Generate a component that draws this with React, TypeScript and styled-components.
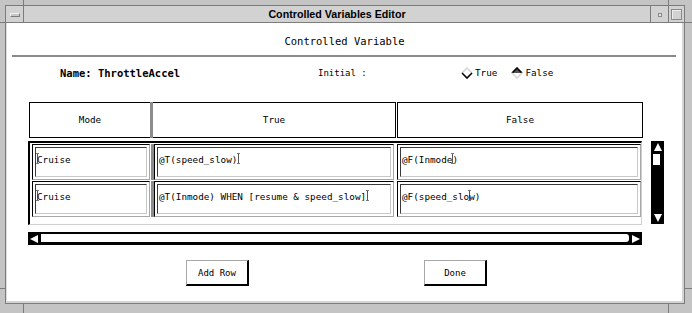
import styled, { createGlobalStyle } from 'styled-components';

const mono = `"DejaVu Sans Mono", "Liberation Mono", monospace`;
const line = '#7c7c7c';

const GlobalStyle = createGlobalStyle`
  html, body {
    margin: 0;
    padding: 0;
    background: #c4c4c4;
  }
`;

const Window = styled.div`
  position: relative;
  width: 692px;
  height: 313px;
  box-sizing: border-box;
  padding: 5px 7px 9px 5px;
  background: #c4c4c4;
  display: flex;
`;

const FrameTick = styled.div<{ $x: number; $y: number; $w: number; $h: number }>`
  position: absolute;
  left: ${p => p.$x}px;
  top: ${p => p.$y}px;
  width: ${p => p.$w}px;
  height: ${p => p.$h}px;
  background: ${line};
`;

const WindowBox = styled.div`
  flex: 1;
  display: flex;
  flex-direction: column;
  border: 1px solid ${line};
`;

const TitleBar = styled.div`
  height: 16px;
  display: flex;
  background: #d2d2d2;
  border-bottom: 1px solid ${line};
`;

const MenuButton = styled.div`
  width: 17px;
  border-right: 1px solid ${line};
  display: flex;
  align-items: center;
  justify-content: center;
`;

const MenuGlyph = styled.div`
  width: 8px;
  height: 2px;
  margin-top: 1px;
  border: 1px solid;
  border-color: #f0f0f0 #7a7a7a #7a7a7a #f0f0f0;
  background: #c8c8c8;
`;

const Title = styled.div`
  flex: 1;
  text-align: center;
  font-family: "Liberation Sans", Arial, sans-serif;
  font-weight: bold;
  font-size: 10.7px;
  line-height: 16px;
  color: #000;
`;

const TitleButton = styled.div<{ $w: number }>`
  width: ${p => p.$w}px;
  border-left: 1px solid ${line};
  display: flex;
  align-items: center;
  justify-content: center;
`;

const MinimizeGlyph = styled.div`
  width: 2px;
  height: 2px;
  margin-top: 1px;
  border: 1px solid #8a8a8a;
  background: #e6e6e6;
`;

const MaximizeGlyph = styled.div`
  width: 9px;
  height: 9px;
  border: 1px solid #8a8a8a;
  box-shadow: inset 1px 1px 0 #ececec;
`;

const Content = styled.div`
  flex: 1;
  display: flex;
  flex-direction: column;
  background: #fff;
  border-left: 1px solid #dcdcdc;
  border-right: 2px solid #d4d4d4;
  border-bottom: 2px solid #d4d4d4;
  font-family: ${mono};
  color: #000;
`;

const Heading = styled.div`
  padding: 12px 0 8px;
  text-align: center;
  font-size: 10.5px;
  line-height: 12px;
`;

const Rule = styled.div`
  height: 2px;
  margin: 0 6px 0 5px;
  background: #8a8a8a;
`;

const NameRow = styled.div`
  display: flex;
  align-items: center;
  padding: 10px 0 23px 53px;
  height: 12px;
`;

const NameLabel = styled.div`
  width: 258px;
  font-weight: bold;
  font-size: 10.5px;
  line-height: 12px;
`;

const InitialLabel = styled.div`
  width: 143px;
  font-size: 9px;
  line-height: 12px;
`;

const Radio = styled.div`
  display: flex;
  align-items: center;
  gap: 2px;
  margin-right: 14px;
  font-size: 9.3px;
  line-height: 12px;
`;

const TableArea = styled.div`
  display: flex;
  flex-direction: column;
  margin-left: 21px;
`;

const HeaderRow = styled.div`
  display: flex;
  height: 36px;
  margin-left: 1px;
`;

const HeaderCell = styled.div<{ $w: number; $left?: boolean; $right?: boolean }>`
  width: ${p => p.$w}px;
  box-sizing: border-box;
  border-top: 1px solid #000;
  border-bottom: 1px solid #000;
  border-left: ${p => (p.$left ? '1px solid #000' : 'none')};
  border-right: ${p => (p.$right ? '1px solid #000' : 'none')};
  display: flex;
  align-items: center;
  justify-content: center;
  font-size: 9.3px;
  padding-bottom: 2px;
`;

const Sash = styled.div<{ $w: number }>`
  width: ${p => p.$w}px;
  background: #8c8c8c;
`;

const Gap = styled.div<{ $w: number }>`
  width: ${p => p.$w}px;
`;

const DataWrap = styled.div`
  display: flex;
  margin-top: 3px;
`;

const DataBox = styled.div`
  width: 614px;
  height: 84px;
  box-sizing: border-box;
  border-style: solid;
  border-width: 2px 1px 1px 2px;
  border-color: #000 #d0d0d0 #d0d0d0 #000;
  padding: 1px 0 0 2px;
  display: flex;
  flex-direction: column;
  gap: 1px;
`;

const DataRow = styled.div`
  display: flex;
  height: 36px;
`;

const Cell = styled.div<{ $w: number }>`
  width: ${p => p.$w}px;
  box-sizing: border-box;
  border: 1px solid;
  border-color: #000 #a8a8a8 #a8a8a8 #000;
  padding: 2px;
  display: flex;
`;

const Field = styled.div`
  flex: 1;
  border: 1px solid;
  border-color: #3a3a3a #c8c8c8 #c8c8c8 #3a3a3a;
  padding: 5px 2px 0 1px;
  font-size: 9.3px;
  line-height: 12px;
  white-space: pre;
  overflow: hidden;
`;

const Caret = styled.span<{ $over?: boolean }>`
  display: inline-block;
  width: 3px;
  height: 9px;
  vertical-align: -1px;
  border-top: 1px solid #777;
  border-bottom: 1px solid #777;
  background: linear-gradient(#555, #555) center / 1px 100% no-repeat;
  margin-right: ${p => (p.$over ? '-2px' : '0')};
  margin-left: ${p => (p.$over ? '-1px' : '0')};
`;

const VScroll = styled.div`
  width: 13px;
  height: 83px;
  margin-left: 9px;
  background: #000;
  display: flex;
  flex-direction: column;
  align-items: center;
  padding: 2px 0 2px;
  box-sizing: border-box;
`;

const VThumb = styled.div`
  width: 7px;
  height: 11px;
  margin: 3px 0 0 -2px;
  background: #fff;
`;

const Spacer = styled.div`
  flex: 1;
`;

const HScroll = styled.div`
  width: 614px;
  height: 13px;
  margin-top: 7px;
  background: #000;
  display: flex;
  align-items: stretch;
`;

const ArrowBox = styled.div`
  width: 12px;
  display: flex;
  align-items: center;
  justify-content: center;
`;

const HThumb = styled.div`
  flex: 1;
  margin: 2px 1px 3px 1px;
  background: #fff;
  border-radius: 0 3px 3px 0;
`;

const ButtonRow = styled.div`
  display: flex;
  margin: 15px 0 0 179px;
  gap: 175px;
`;

const PushButton = styled.button`
  width: 63px;
  height: 26px;
  box-sizing: border-box;
  padding: 0;
  background: #fff;
  border-style: solid;
  border-width: 1px 2px 2px 1px;
  border-color: #a8a8a8 #000 #000 #a8a8a8;
  font-family: ${mono};
  font-size: 9px;
  color: #000;
`;

function Diamond({ selected }: { selected: boolean }) {
  return (
    <svg width="12" height="12" viewBox="0 0 12 12">
      {selected && <polygon points="6,1 11,6 1,6" fill="#555" />}
      <polyline
        points="1,6 6,1 11,6"
        fill="none"
        stroke={selected ? '#000' : '#d8d8d8'}
        strokeWidth="1.6"
      />
      <polyline
        points="1,6 6,11 11,6"
        fill="none"
        stroke={selected ? '#d8d8d8' : '#000'}
        strokeWidth="1.6"
      />
    </svg>
  );
}

function Arrow({ dir }: { dir: 'up' | 'down' | 'left' | 'right' }) {
  const pts = {
    up: '4,0 8,8 0,8',
    down: '0,0 8,0 4,8',
    left: '0,4 8,0 8,8',
    right: '0,0 8,4 0,8',
  }[dir];
  return (
    <svg width="8" height="8" viewBox="0 0 8 8">
      <polygon points={pts} fill="#fff" />
    </svg>
  );
}

const rows = [
  { mode: 'Cruise', t: '@T(speed_slow)', f: '@F(Inmode', fEnd: ')' },
  { mode: 'Cruise', t: '@T(Inmode) WHEN [resume & speed_slow]', f: '@F(speed_slo', fEnd: 'w)' },
];

export default function App() {
  return (
    <>
      <GlobalStyle />
      <Window>
        <FrameTick $x={23} $y={0} $w={1} $h={6} />
        <FrameTick $x={668} $y={0} $w={1} $h={6} />
        <FrameTick $x={23} $y={304} $w={1} $h={9} />
        <FrameTick $x={668} $y={304} $w={1} $h={9} />
        <FrameTick $x={0} $y={22} $w={6} $h={1} />
        <FrameTick $x={685} $y={22} $w={7} $h={1} />
        <FrameTick $x={0} $y={288} $w={6} $h={1} />
        <FrameTick $x={685} $y={288} $w={7} $h={1} />
        <WindowBox>
          <TitleBar>
            <MenuButton>
              <MenuGlyph />
            </MenuButton>
            <Title>Controlled Variables Editor</Title>
            <TitleButton $w={17}>
              <MinimizeGlyph />
            </TitleButton>
            <TitleButton $w={15}>
              <MaximizeGlyph />
            </TitleButton>
          </TitleBar>
          <Content>
            <Heading>Controlled Variable</Heading>
            <Rule />
            <NameRow>
              <NameLabel>Name: ThrottleAccel</NameLabel>
              <InitialLabel>Initial :</InitialLabel>
              <Radio>
                <Diamond selected={false} />
                True
              </Radio>
              <Radio>
                <Diamond selected />
                False
              </Radio>
            </NameRow>
            <TableArea>
              <HeaderRow>
                <HeaderCell $w={121} $left>Mode</HeaderCell>
                <Sash $w={3} />
                <HeaderCell $w={243} $right>True</HeaderCell>
                <Gap $w={1} />
                <HeaderCell $w={246} $left $right>False</HeaderCell>
              </HeaderRow>
              <DataWrap>
                <DataBox>
                  {rows.map((r, i) => (
                    <DataRow key={i}>
                      <Cell $w={118}>
                        <Field>
                          <Caret $over />
                          {r.mode}
                        </Field>
                      </Cell>
                      <Gap $w={1} />
                      <Sash $w={3} />
                      <Cell $w={240}>
                        <Field>
                          {r.t}
                          <Caret />
                        </Field>
                      </Cell>
                      <Gap $w={3} />
                      <Cell $w={244}>
                        <Field>
                          {r.f}
                          <Caret $over />
                          {r.fEnd}
                        </Field>
                      </Cell>
                    </DataRow>
                  ))}
                </DataBox>
                <VScroll>
                  <Arrow dir="up" />
                  <VThumb />
                  <Spacer />
                  <Arrow dir="down" />
                </VScroll>
              </DataWrap>
              <HScroll>
                <ArrowBox>
                  <Arrow dir="left" />
                </ArrowBox>
                <HThumb />
                <ArrowBox>
                  <Arrow dir="right" />
                </ArrowBox>
              </HScroll>
            </TableArea>
            <ButtonRow>
              <PushButton>Add Row</PushButton>
              <PushButton>Done</PushButton>
            </ButtonRow>
          </Content>
        </WindowBox>
      </Window>
    </>
  );
}
